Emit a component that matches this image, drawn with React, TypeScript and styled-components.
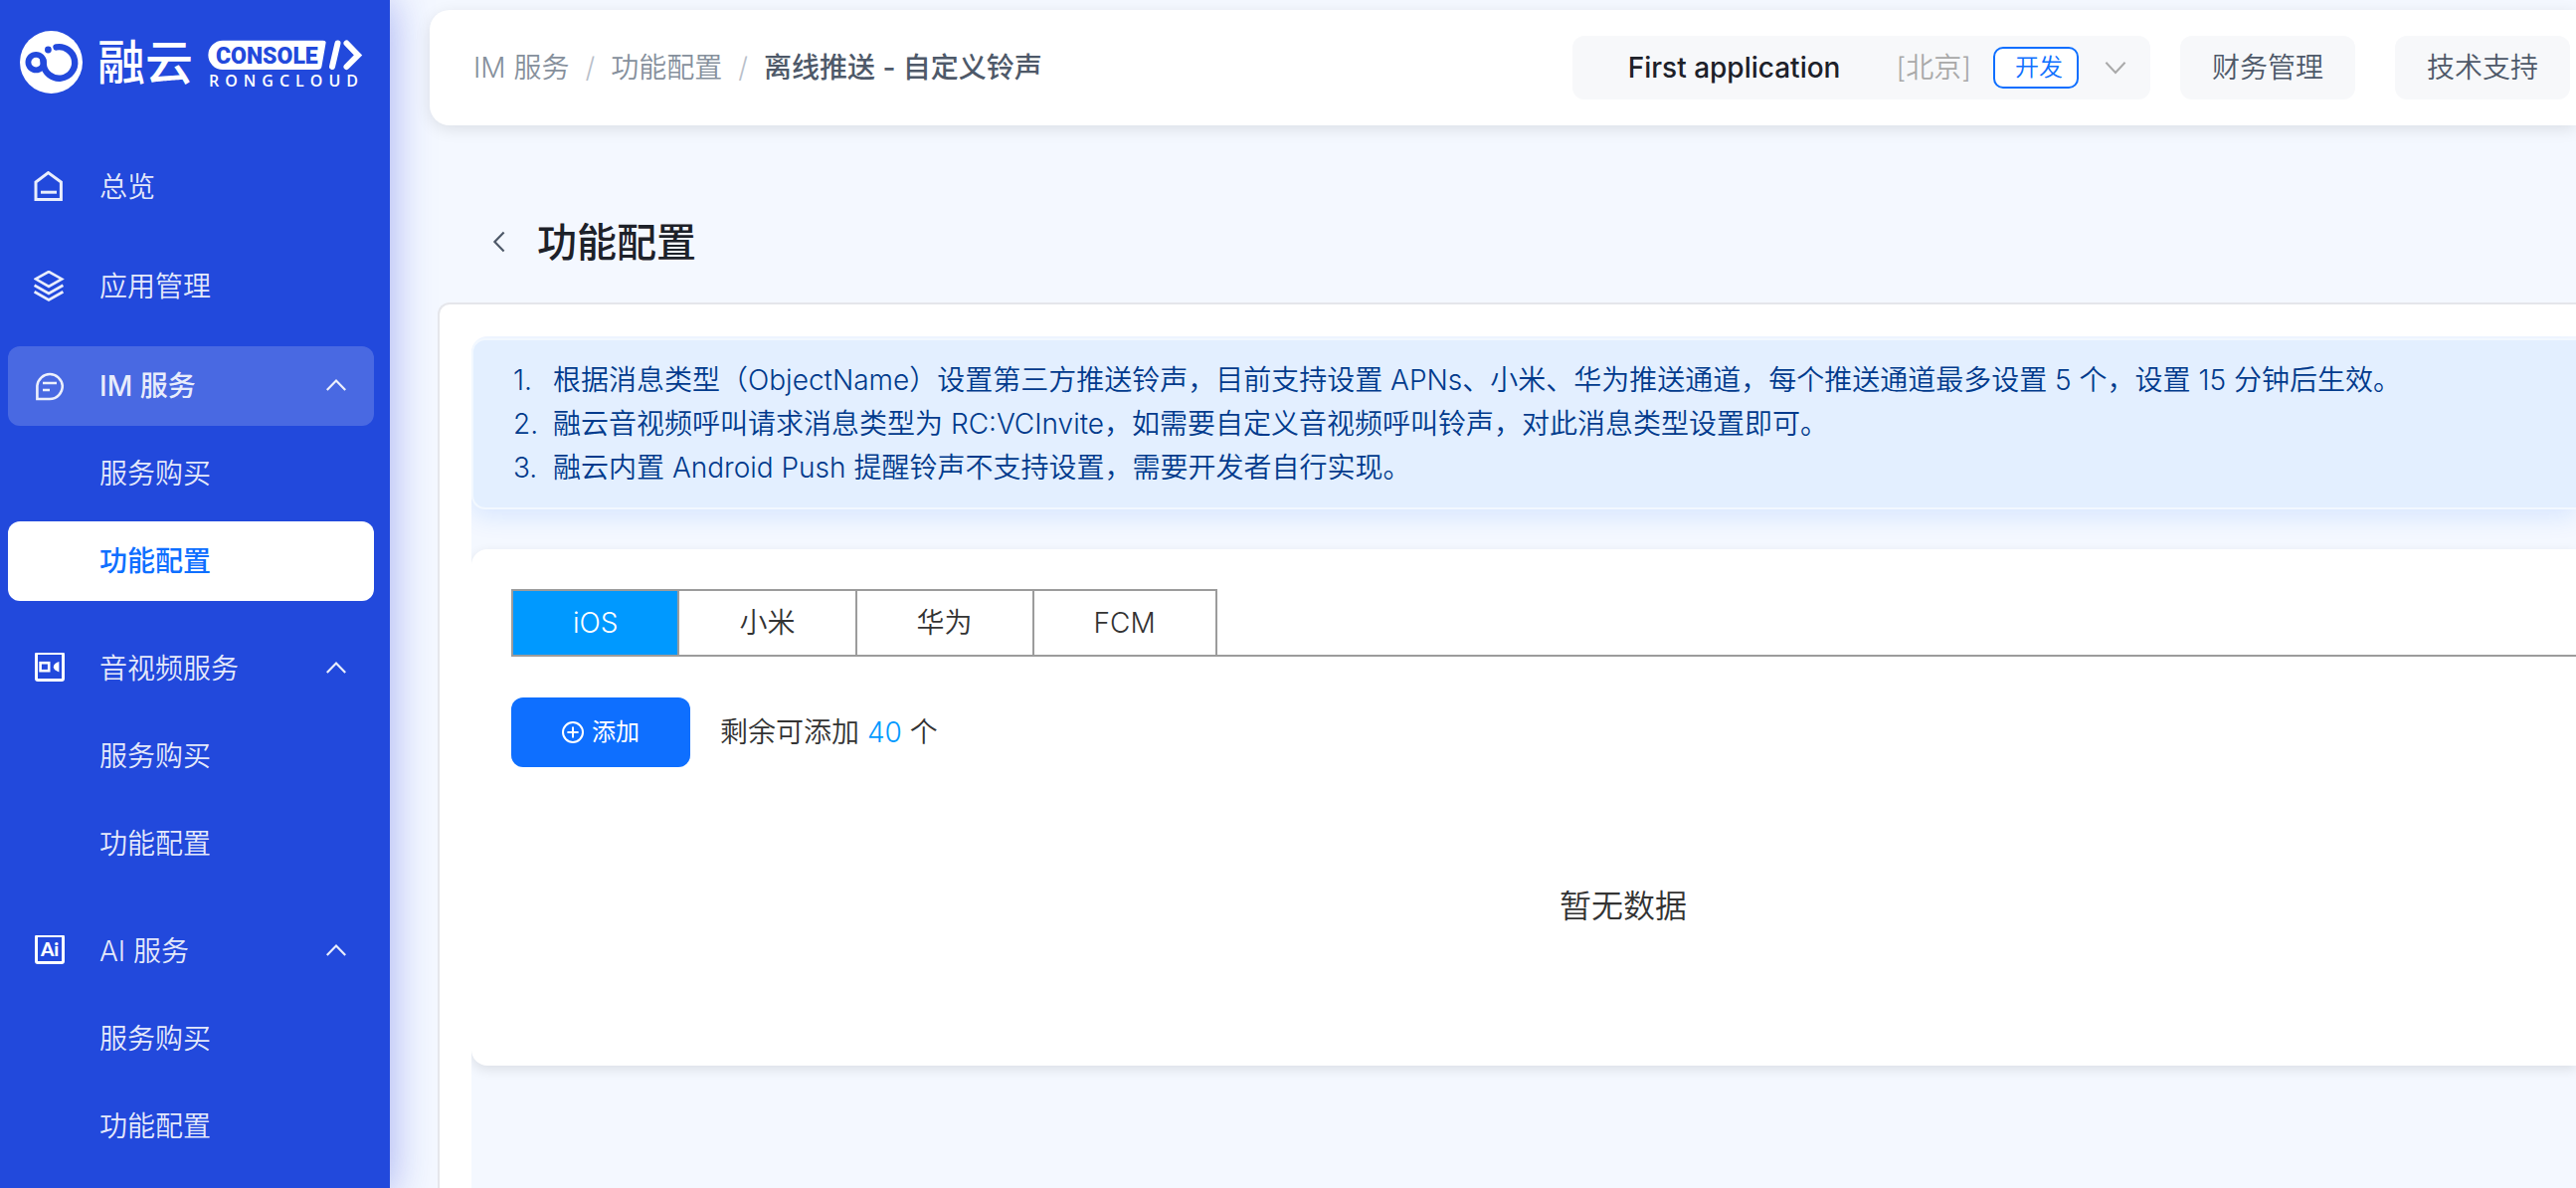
import React, { useState } from "react";
import styled, { createGlobalStyle } from "styled-components";

const GlobalStyle = createGlobalStyle`
  *, *::before, *::after { box-sizing: border-box; }
  html, body { margin: 0; padding: 0; overflow-x: hidden; }
  body {
    background: #f4f8ff;
    color: #333333;
    font-family: Inter, "Noto Sans CJK SC", sans-serif;
    font-size: 28px;
    font-weight: 350;
    line-height: 44px;
  }
  button { font: inherit; color: inherit; border: 0; background: none; padding: 0; cursor: pointer; }
  a { color: inherit; text-decoration: none; }
  svg { display: block; flex: none; }
`;

const Page = styled.div`
  display: flex;
  min-height: 100vh;
`;

/* ---------- Sidebar ---------- */

const Sidebar = styled.aside`
  flex: none;
  width: 392px;
  background: #2249dc;
  color: rgba(255, 255, 255, 0.9);
  box-shadow: 0 0 40px rgba(34, 56, 220, 0.4);
`;

const Brand = styled.a`
  display: block;
  height: 148px;
  padding: 18px 20px 0;
`;

const Menu = styled.nav`
  display: flex;
  flex-direction: column;
  gap: 20px;
  padding: 0 16px 20px 8px;
`;

const MenuItem = styled.button<{ $active?: boolean }>`
  display: flex;
  align-items: center;
  width: 100%;
  height: 80px;
  padding: 0 28px 0 26px;
  border-radius: 12px;
  text-align: left;
  background: ${(p) => (p.$active ? "rgba(255, 255, 255, 0.18)" : "none")};
  font-weight: ${(p) => (p.$active ? 500 : 350)};
`;

const MenuLabel = styled.span`
  flex: 1;
  margin-left: 34px;
`;

const SubList = styled.ul`
  display: flex;
  flex-direction: column;
  gap: 8px;
  margin: 0;
  padding: 8px 0;
  list-style: none;
`;

const SubItem = styled.a<{ $current?: boolean }>`
  display: flex;
  align-items: center;
  height: 80px;
  padding-left: 92px;
  border-radius: 12px;
  background: ${(p) => (p.$current ? "#ffffff" : "none")};
  color: ${(p) => (p.$current ? "#0e6fff" : "inherit")};
  font-weight: ${(p) => (p.$current ? 500 : 350)};
`;

/* ---------- Header ---------- */

const Main = styled.main`
  display: flex;
  flex: 1;
  flex-direction: column;
  min-width: 0;
`;

const Header = styled.header`
  display: flex;
  align-items: center;
  height: 116px;
  margin: 10px 0 0 40px;
  padding: 0 6px 0 44px;
  border-radius: 20px 0 0 20px;
  background: #ffffff;
  box-shadow: 0 4px 16px rgba(0, 0, 0, 0.1);
`;

const Crumbs = styled.nav`
  display: flex;
  flex: 1;
  align-items: center;
  gap: 16px;
  color: #86909c;
  white-space: nowrap;
`;

const CrumbSeparator = styled.span`
  color: #b9c0ca;
`;

const CurrentCrumb = styled.span`
  color: #4e5969;
  font-weight: 500;
`;

const AppSwitch = styled.button`
  display: flex;
  align-items: center;
  height: 64px;
  margin-right: 30px;
  padding: 0 24px 0 56px;
  border-radius: 12px;
  background: #f7f8fa;
`;

const AppName = styled.span`
  margin-right: 56px;
  color: #1d2129;
  font-weight: 450;
`;

const Region = styled.span`
  margin-right: 22px;
  color: #a9a9a9;
`;

const EnvTag = styled.span`
  display: flex;
  align-items: center;
  justify-content: center;
  width: 86px;
  height: 42px;
  margin-right: 26px;
  padding-left: 6px;
  border: 2px solid #0e6fff;
  border-radius: 10px;
  background: #ffffff;
  color: #0e6fff;
  font-size: 24px;
`;

const HeaderLinks = styled.div`
  display: flex;
  gap: 40px;
`;

const HeaderButton = styled.button`
  height: 64px;
  padding: 0 32px;
  border-radius: 12px;
  background: #f7f8fa;
  color: #4e5969;
  white-space: nowrap;
`;

/* ---------- Content ---------- */

const TitleBar = styled.div`
  display: flex;
  align-items: center;
  gap: 28px;
  margin: 88px 0 30px 100px;
  height: 60px;
`;

const BackButton = styled.button`
  display: flex;
  align-items: center;
  height: 40px;
`;

const Title = styled.h1`
  margin: 0;
  color: #1d2129;
  font-size: 40px;
  font-weight: 500;
  line-height: 60px;
`;

const Panel = styled.section`
  display: flex;
  flex: 1;
  margin-left: 48px;
  padding: 32px 0 0 32px;
  border: solid #e5e6eb;
  border-width: 2px 0 0 2px;
  border-radius: 12px 0 0 0;
  background: #ffffff;
`;

const Body = styled.div`
  flex: 1;
  min-width: 0;
  padding-top: 2px;
  border-radius: 16px 0 0 0;
  background: #f4f8ff;
  overflow: hidden;
`;

const Notice = styled.ol`
  margin: 0 0 40px;
  padding: 18px 40px;
  border: solid #f2f8ff;
  border-width: 2px 0 2px 2px;
  border-radius: 14px 0 0 14px;
  background: #e3efff;
  box-shadow: 0 8px 24px rgba(14, 111, 255, 0.12);
  color: #003a8c;
  list-style: none;
`;

const NoticeItem = styled.li`
  display: flex;
`;

const NoticeNumber = styled.span`
  flex: none;
  width: 40px;
`;

const Card = styled.div`
  padding: 40px 0 138px 40px;
  border-radius: 16px 0 0 16px;
  background: #ffffff;
  box-shadow: 0 4px 12px rgba(0, 0, 0, 0.1);
`;

const Tabs = styled.div`
  display: flex;
  border-bottom: 2px solid #9c9c9c;
`;

const Tab = styled.button<{ $selected: boolean }>`
  height: 66px;
  padding: 0 60px;
  border: solid #9c9c9c;
  border-width: 2px 2px 0 0;
  background: ${(p) => (p.$selected ? "#0099ff" : "#ffffff")};
  color: ${(p) => (p.$selected ? "#ffffff" : "#333333")};

  &:first-child {
    border-left-width: 2px;
  }
`;

const Actions = styled.div`
  display: flex;
  align-items: center;
  gap: 30px;
  padding-top: 41px;
`;

const AddButton = styled.button`
  display: flex;
  align-items: center;
  justify-content: center;
  gap: 8px;
  width: 180px;
  height: 70px;
  border-radius: 12px;
  background: #0e6fff;
  color: #ffffff;
  font-size: 24px;
  font-weight: 400;
`;

const Remaining = styled.span`
  strong {
    color: #0099ff;
    font-weight: 350;
  }
`;

const Empty = styled.p`
  margin: 0;
  padding: 118px 0 0 160px;
  text-align: center;
  font-size: 32px;
`;

/* ---------- Drawings ---------- */

const Logo = () => (
  <svg width="350" height="90" viewBox="0 -12 350 90" role="img" aria-label="融云 CONSOLE RONGCLOUD">
    <circle cx="31.5" cy="32.5" r="31.5" fill="#ffffff" />
    <g fill="none" stroke="#2249dc" strokeLinecap="round">
      <circle cx="16.2" cy="32.6" r="7.8" strokeWidth="5.8" />
      <path d="M36.5 17.4 A15.8 15.8 0 1 1 23.7 34.5 L23.3 30.5" strokeWidth="6.4" />
    </g>
    <circle cx="28.4" cy="20" r="3.4" fill="#2249dc" />
    <text x="78" y="50" fontSize="48" fontWeight="500" fill="#ffffff" fontFamily="Noto Sans CJK SC">融云</text>
    <path d="M204 10.7 H305 Q308 10.7 307.6 13 L303.4 37 Q302.8 40 299.6 40 H204 A14.6 14.6 0 0 1 204 10.7 Z" fill="#ffffff" />
    <text x="197" y="34" fontSize="23" fontWeight="900" fill="#2249dc" fontFamily="Roboto">CONSOLE</text>
    <g fill="none" stroke="#ffffff" strokeWidth="6" strokeLinecap="round">
      <path d="M319.5 13.5 L314 37" />
      <path d="M328.5 13.5 L340 25.4 L328.5 37" />
    </g>
    <text x="190" y="57" fontSize="16" fontWeight="600" letterSpacing="6" fill="#ffffff" fontFamily="Open Sans">RONGCLOUD</text>
  </svg>
);

const Icon = ({ children }: { children: React.ReactNode }) => (
  <svg width="32" height="32" viewBox="0 0 32 32" fill="none" stroke="currentColor" strokeWidth="3" aria-hidden="true">
    {children}
  </svg>
);

const HomeIcon = () => (
  <Icon>
    <path d="M2 28.4 V11 L14.5 1.6 L27.4 11 V28.4 Z" />
    <path d="M7 21.2 H23" />
  </Icon>
);

const LayersIcon = () => (
  <Icon>
    <path d="M1.8 8.4 L15 1 L28.2 8.4 L15 16 Z" strokeWidth="2.6" />
    <path d="M0.6 14.8 L15 23 L29.4 14.8" strokeWidth="2.8" />
    <path d="M0.6 21.2 L15 29.4 L29.4 21.2" strokeWidth="2.8" />
  </Icon>
);

const MessageIcon = () => (
  <Icon>
    <path d="M3.4 29 V15.6 A12.8 13.2 0 0 1 28.8 15.6 A12.8 13.2 0 0 1 16 29 Z" strokeWidth="2.6" />
    <path d="M9 13 H23 M9 20 H16" strokeWidth="2.4" />
  </Icon>
);

const VideoIcon = () => (
  <Icon>
    <rect x="2.5" y="0.5" width="27" height="27" rx="1.5" stroke="#ffffff" />
    <rect x="6.6" y="10.2" width="8.6" height="8" stroke="#ffffff" strokeWidth="2.6" />
    <path d="M25.4 9 V19.4 C21.6 18 19.8 16.4 19.8 14.2 C19.8 12 21.6 10.4 25.4 9 Z" fill="#ffffff" stroke="none" />
  </Icon>
);

const AiIcon = () => (
  <Icon>
    <rect x="2.5" y="0.5" width="27" height="27" rx="1.5" stroke="#ffffff" />
    <text x="7" y="21" fontSize="19" fontWeight="900" fontFamily="Lato" fill="#ffffff" stroke="none">Ai</text>
  </Icon>
);

const ChevronUp = () => (
  <svg width="20" height="14" viewBox="0 0 20 14" fill="none" stroke="currentColor" strokeWidth="2.2" aria-hidden="true">
    <path d="M0.8 11 L10 1.6 L19.2 11" />
  </svg>
);

const ChevronDown = () => (
  <svg width="22" height="14" viewBox="0 0 22 14" fill="none" stroke="#a9a9a9" strokeWidth="2" aria-hidden="true">
    <path d="M1.4 1.8 L11 12 L20.6 1.8" />
  </svg>
);

const BackIcon = () => (
  <svg width="20" height="28" viewBox="0 0 20 28" fill="none" stroke="#4e5969" strokeWidth="2.2" aria-hidden="true">
    <path d="M14.6 3.6 L5.4 13 L14.6 22.4" />
  </svg>
);

const PlusCircle = () => (
  <svg width="22" height="22" viewBox="0 0 22 22" fill="none" stroke="currentColor" strokeWidth="2" aria-hidden="true">
    <circle cx="11" cy="11" r="10" />
    <path d="M11 5.4 V16.6 M5.4 11 H16.6" />
  </svg>
);

/* ---------- Data ---------- */

const groups = [
  { label: "IM 服务", icon: <MessageIcon />, active: true, current: "功能配置" },
  { label: "音视频服务", icon: <VideoIcon />, active: false, current: "" },
  { label: "AI 服务", icon: <AiIcon />, active: false, current: "" },
];

const subItems = ["服务购买", "功能配置"];

const channels = ["iOS", "小米", "华为", "FCM"];

const notes = [
  "根据消息类型（ObjectName）设置第三方推送铃声，目前支持设置 APNs、小米、华为推送通道，每个推送通道最多设置 5 个，设置 15 分钟后生效。",
  "融云音视频呼叫请求消息类型为 RC:VCInvite，如需要自定义音视频呼叫铃声，对此消息类型设置即可。",
  "融云内置 Android Push 提醒铃声不支持设置，需要开发者自行实现。",
];

export default function App() {
  const [channel, setChannel] = useState("iOS");

  return (
    <Page lang="zh-CN">
      <GlobalStyle />
      <Sidebar>
        <Brand href="#">
          <Logo />
        </Brand>
        <Menu aria-label="主菜单">
          <MenuItem>
            <HomeIcon />
            <MenuLabel>总览</MenuLabel>
          </MenuItem>
          <MenuItem>
            <LayersIcon />
            <MenuLabel>应用管理</MenuLabel>
          </MenuItem>
          {groups.map((group) => (
            <div key={group.label}>
              <MenuItem $active={group.active} aria-expanded="true">
                {group.icon}
                <MenuLabel>{group.label}</MenuLabel>
                <ChevronUp />
              </MenuItem>
              <SubList>
                {subItems.map((item) => (
                  <li key={item}>
                    <SubItem href="#" $current={item === group.current}>
                      {item}
                    </SubItem>
                  </li>
                ))}
              </SubList>
            </div>
          ))}
        </Menu>
      </Sidebar>

      <Main>
        <Header>
          <Crumbs aria-label="面包屑">
            <a href="#">IM 服务</a>
            <CrumbSeparator>/</CrumbSeparator>
            <a href="#">功能配置</a>
            <CrumbSeparator>/</CrumbSeparator>
            <CurrentCrumb>离线推送 - 自定义铃声</CurrentCrumb>
          </Crumbs>
          <AppSwitch aria-haspopup="listbox">
            <AppName>First application</AppName>
            <Region>[北京]</Region>
            <EnvTag>开发</EnvTag>
            <ChevronDown />
          </AppSwitch>
          <HeaderLinks>
            <HeaderButton>财务管理</HeaderButton>
            <HeaderButton>技术支持</HeaderButton>
          </HeaderLinks>
        </Header>

        <TitleBar>
          <BackButton aria-label="返回">
            <BackIcon />
          </BackButton>
          <Title>功能配置</Title>
        </TitleBar>

        <Panel>
          <Body>
            <Notice>
              {notes.map((note, index) => (
                <NoticeItem key={note}>
                  <NoticeNumber>{index + 1}.</NoticeNumber>
                  <span>{note}</span>
                </NoticeItem>
              ))}
            </Notice>
            <Card>
              <Tabs role="tablist">
                {channels.map((name) => (
                  <Tab
                    key={name}
                    role="tab"
                    aria-selected={name === channel}
                    $selected={name === channel}
                    onClick={() => setChannel(name)}
                  >
                    {name}
                  </Tab>
                ))}
              </Tabs>
              <Actions>
                <AddButton>
                  <PlusCircle />
                  添加
                </AddButton>
                <Remaining>
                  剩余可添加 <strong>40</strong> 个
                </Remaining>
              </Actions>
              <Empty>暂无数据</Empty>
            </Card>
          </Body>
        </Panel>
      </Main>
    </Page>
  );
}
